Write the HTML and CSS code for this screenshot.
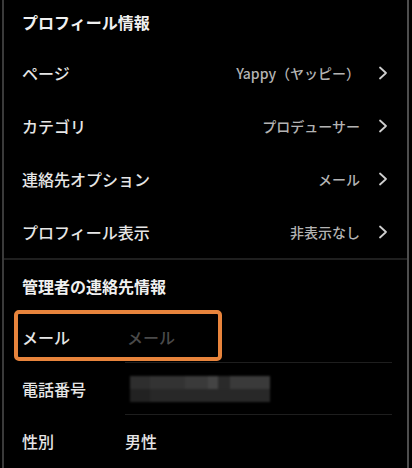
FILE: index.html
```html
<!DOCTYPE html>
<html lang="ja">
<head>
    <meta charset="UTF-8">
    <meta name="viewport" content="width=device-width, initial-scale=1.0">
    <title>プロフィール編集</title>
    <link rel="stylesheet" href="styles.css">
</head>
<body>
    <div class="screen">
        <section class="profile-info">
            <h2 class="section-title">プロフィール情報</h2>
            <ul class="menu-list">
                <li class="menu-row">
                    <span class="row-label">ページ</span>
                    <span class="row-value">Yappy（ヤッピー）</span>
                    <svg class="chevron" width="10" height="14" viewBox="0 0 10 14"><polyline points="2,1.5 8,7 2,12.5" /></svg>
                </li>
                <li class="menu-row">
                    <span class="row-label">カテゴリ</span>
                    <span class="row-value">プロデューサー</span>
                    <svg class="chevron" width="10" height="14" viewBox="0 0 10 14"><polyline points="2,1.5 8,7 2,12.5" /></svg>
                </li>
                <li class="menu-row">
                    <span class="row-label">連絡先オプション</span>
                    <span class="row-value">メール</span>
                    <svg class="chevron" width="10" height="14" viewBox="0 0 10 14"><polyline points="2,1.5 8,7 2,12.5" /></svg>
                </li>
                <li class="menu-row">
                    <span class="row-label">プロフィール表示</span>
                    <span class="row-value">非表示なし</span>
                    <svg class="chevron" width="10" height="14" viewBox="0 0 10 14"><polyline points="2,1.5 8,7 2,12.5" /></svg>
                </li>
            </ul>
        </section>

        <section class="admin-contact">
            <h2 class="section-title">管理者の連絡先情報</h2>
            <div class="field-row highlighted">
                <span class="field-label">メール</span>
                <span class="field-input placeholder">メール</span>
                <div class="highlight-box"></div>
            </div>
            <div class="field-row">
                <span class="field-label">電話番号</span>
                <span class="field-input">
                    <span class="mosaic"></span>
                </span>
            </div>
            <div class="field-row no-line">
                <span class="field-label">性別</span>
                <span class="field-input">男性</span>
            </div>
        </section>
    </div>
</body>
</html>
```

FILE: styles.css
```css
body {
    margin: 0;
    padding: 0;
    background-color: #000;
    font-family: "Noto Sans CJK JP", "Noto Sans", sans-serif;
    color: #e8e8e8;
}

.screen {
    margin-left: 2px;
    width: 403px;
    height: 468px;
    border-left: 2px solid #3a3a3a;
    border-right: 2px solid #4e4e4e;
    overflow: hidden;
}

.section-title {
    margin: 0;
    padding-left: 18px;
    font-size: 16px;
    font-weight: 700;
    color: #f0f0f0;
    display: flex;
    align-items: center;
}

.profile-info {
    border-bottom: 2px solid #1f1f1f;
}

.profile-info .section-title {
    height: 43px;
}

.menu-list {
    list-style: none;
    margin: 3px 0 0;
    padding: 0;
}

.menu-row {
    height: 53px;
    display: flex;
    align-items: center;
    padding: 0 19px 0 18px;
}

.row-label {
    font-size: 16px;
    font-weight: 500;
    color: #e6e6e6;
    flex: 1;
}

.row-value {
    font-size: 14px;
    font-weight: 500;
    color: #b4b4b4;
    margin-right: 18px;
}

.chevron polyline {
    fill: none;
    stroke: #cfcfcf;
    stroke-width: 1.8;
    stroke-linecap: round;
    stroke-linejoin: round;
}

.admin-contact .section-title {
    height: 51px;
}

.field-row {
    position: relative;
    height: 52px;
    display: flex;
    align-items: center;
    padding-left: 18px;
}

.field-row::after {
    content: "";
    position: absolute;
    left: 121px;
    right: 15px;
    bottom: 0;
    height: 1px;
    background-color: #1e1e1e;
}

.field-row.no-line::after {
    display: none;
}

.field-label {
    width: 103px;
    font-size: 16px;
    font-weight: 500;
    color: #e6e6e6;
}

.field-input {
    font-size: 16px;
    font-weight: 500;
    color: #e6e6e6;
    display: flex;
    align-items: center;
}

.field-input.placeholder {
    color: #4a4a4a;
    padding-left: 2px;
}

.highlight-box {
    position: absolute;
    left: 10px;
    top: -1px;
    width: 200px;
    height: 43px;
    border: 4px solid #e8843c;
    border-radius: 5px;
}

.mosaic {
    display: block;
    width: 140px;
    height: 26px;
    margin-left: 5px;
    background:
        linear-gradient(to right, #2e2e2e 0 20px, #333 20px 55px, #3a3a3a 55px 78px, #444 78px 88px, #2a2a2a 88px 100px, #3a3a3a 100px 140px) top / 100% 13px no-repeat,
        linear-gradient(to right, #222 0 20px, #282828 20px 140px) bottom / 100% 13px no-repeat;
    filter: blur(1px);
}
```
